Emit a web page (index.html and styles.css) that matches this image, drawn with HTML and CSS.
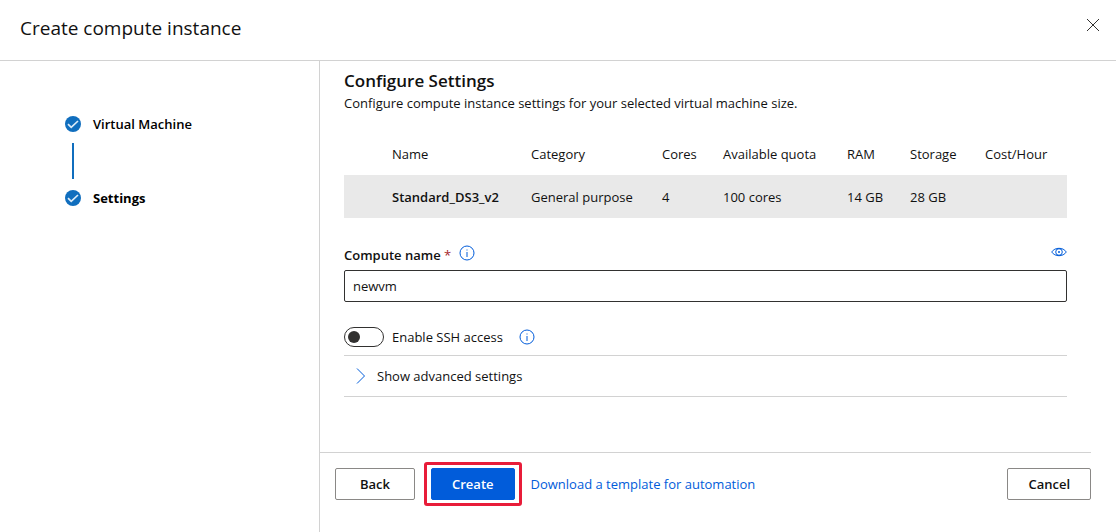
FILE: index.html
```html
<!DOCTYPE html>
<html lang="en">
<head>
<meta charset="utf-8">
<meta name="viewport" content="width=device-width, initial-scale=1">
<title>Create compute instance</title>
<link rel="stylesheet" href="styles.css">
</head>
<body>
<svg class="sprite" aria-hidden="true">
  <symbol id="info" viewBox="0 0 16 16">
    <circle cx="8" cy="8" r="7" fill="none" stroke="currentColor"/>
    <path d="M7.5 4.5h1v1h-1zM7.5 7h1v5h-1z" fill="currentColor"/>
  </symbol>
  <symbol id="done" viewBox="0 0 16 16">
    <circle cx="8" cy="8" r="8" fill="currentColor"/>
    <path d="M3 8.200l3.200 3.200 6.800-6.400" fill="none" stroke="#dcebf8" stroke-width="1.700"/>
  </symbol>
</svg>
<header class="header">
  <h1 class="title">Create compute instance</h1>
  <button class="icon-button" type="button" aria-label="Close">
    <svg class="close-icon" viewBox="0 0 14 14"><path d="M1 1l12 12M13 1L1 13" fill="none" stroke="#323130"/></svg>
  </button>
</header>
<div class="layout">
  <nav class="steps" aria-label="Steps">
    <ol class="step-list">
      <li class="step"><svg class="step-icon"><use href="#done"/></svg>Virtual Machine</li>
      <li class="step step-current" aria-current="step"><svg class="step-icon"><use href="#done"/></svg>Settings</li>
    </ol>
  </nav>
  <div class="panel">
    <main class="content">
      <h2 class="heading">Configure Settings</h2>
      <p class="lead">Configure compute instance settings for your selected virtual machine size.</p>
      <table class="sizes">
        <colgroup><col class="col-pick"><col class="col-name"><col class="col-category"><col class="col-cores"><col class="col-quota"><col class="col-ram"><col class="col-storage"><col></colgroup>
        <thead>
          <tr><td></td><th scope="col">Name</th><th scope="col">Category</th><th scope="col">Cores</th><th scope="col">Available quota</th><th scope="col">RAM</th><th scope="col">Storage</th><th scope="col">Cost/Hour</th></tr>
        </thead>
        <tbody>
          <tr><td></td><th class="size-name" scope="row">Standard_DS3_v2</th><td>General purpose</td><td>4</td><td>100 cores</td><td>14 GB</td><td>28 GB</td><td></td></tr>
        </tbody>
      </table>
      <div class="field-head">
        <label class="field-label" for="name">Compute name <span class="required">*</span></label>
        <button class="icon-button" type="button" aria-label="About compute name"><svg class="info-icon"><use href="#info"/></svg></button>
        <button class="icon-button reveal" type="button" aria-label="Preview">
          <svg class="eye-icon" viewBox="0 0 16 10"><path d="M.7 5C2.500 2.400 5 1.300 8 1.300S13.500 2.400 15.300 5C13.500 7.600 11 8.700 8 8.700S2.500 7.600.7 5z" fill="none" stroke="currentColor"/><circle cx="8" cy="5" r="3.300" fill="none" stroke="currentColor"/><circle cx="8" cy="5" r="1" fill="currentColor"/></svg>
        </button>
      </div>
      <input class="text-input" id="name" type="text" value="newvm">
      <div class="toggle-row">
        <input class="toggle" id="ssh" type="checkbox" role="switch">
        <label for="ssh">Enable SSH access</label>
        <button class="icon-button toggle-info" type="button" aria-label="About SSH access"><svg class="info-icon"><use href="#info"/></svg></button>
      </div>
      <button class="advanced" type="button" aria-expanded="false">
        <svg class="chevron" viewBox="0 0 10 16"><path d="M1 .5L8.500 8 1 15.500" fill="none" stroke="currentColor"/></svg>
        Show advanced settings
      </button>
    </main>
    <footer class="footer">
      <button class="button" type="button">Back</button>
      <div class="highlight"><button class="button primary" type="button">Create</button></div>
      <a class="link" href="#template">Download a template for automation</a>
      <button class="button cancel" type="button">Cancel</button>
    </footer>
  </div>
</div>
</body>
</html>
```
FILE: styles.css
```css
* { box-sizing: border-box; }
body {
  display: flex;
  flex-direction: column;
  min-height: 100vh;
  margin: 0;
  background: #fff;
  color: #111;
  font: 13px/20px "Segoe UI", "Open Sans", "Noto Sans", sans-serif;
}
button, input { font: inherit; color: inherit; }
svg { display: block; }
.sprite { position: absolute; width: 0; height: 0; }
.header {
  display: flex;
  justify-content: space-between;
  padding: 14px 16px 18px 20px;
  border-bottom: 1px solid #d2d2d2;
}
.title { margin: 0; font-size: 19px; font-weight: 400; line-height: 28px; }
.icon-button { display: flex; align-items: center; padding: 0; border: 0; background: none; color: #015cda; }
.close-icon { width: 14px; height: 14px; margin: 0 0 6px; }
.layout { display: flex; flex: 1; }
.steps { flex: 0 0 320px; padding: 53px 24px 0 65px; border-right: 1px solid #d2d2d2; }
.step-list { display: flex; flex-direction: column; margin: 0; padding: 0; list-style: none; }
.step { display: flex; align-items: center; gap: 12px; font-weight: 600; color: #000; }
.step + .step { flex-wrap: wrap; }
.step + .step::before {
  content: "";
  flex: 0 0 100%;
  height: 36px;
  margin: 9px 0 0 7px;
  border-left: 2px solid #106ebe;
}
.step-current { row-gap: 9px; font-weight: 700; }
.step-icon { width: 16px; height: 16px; color: #106ebe; }
.panel { display: flex; flex: 1; flex-direction: column; min-width: 0; }
.content { flex: 1; padding: 8px 49px 24px 24px; }
.heading { margin: 0; font-size: 17px; font-weight: 600; line-height: 24px; }
.lead { margin: 0 0 19px; }
.sizes { width: 100%; table-layout: fixed; border-collapse: collapse; }
.sizes th, .sizes td { height: 43px; padding: 0; font-weight: 400; text-align: left; white-space: nowrap; }
.sizes tbody { background: #e9e9e9; }
.sizes .size-name { font-weight: 600; }
.col-pick { width: 48px; }
.col-name { width: 139px; }
.col-category { width: 131px; }
.col-cores { width: 61px; }
.col-quota { width: 124px; }
.col-ram { width: 63px; }
.col-storage { width: 75px; }
.field-head { display: flex; align-items: flex-start; gap: 8px; margin: 27px 0 5px; }
.field-label { font-weight: 600; }
.required { color: #a4262c; font-weight: 400; }
.info-icon { width: 16px; height: 16px; }
.reveal { margin-left: auto; }
.eye-icon { width: 16px; height: 10px; margin: 2px 0; }
.text-input {
  display: block;
  width: 100%;
  height: 32px;
  padding: 0 8px;
  border: 1px solid #323130;
  border-radius: 2px;
  background: #fff;
}
.toggle-row { display: flex; align-items: center; gap: 8px; padding: 25px 0 8px; border-bottom: 1px solid #d2d2d2; }
.toggle {
  appearance: none;
  display: flex;
  align-items: center;
  width: 40px;
  height: 20px;
  margin: 0;
  padding: 0 3px;
  border: 1px solid #323130;
  border-radius: 10px;
}
.toggle::before { content: ""; width: 12px; height: 12px; border-radius: 50%; background: #323130; }
.toggle:checked { justify-content: flex-end; }
.toggle-info { margin-left: 8px; }
.advanced {
  display: flex;
  align-items: center;
  gap: 11px;
  width: 100%;
  padding: 10px 12px;
  border: 0;
  border-bottom: 1px solid #d2d2d2;
  background: none;
}
.chevron { width: 10px; height: 16px; color: #015cda; }
.footer {
  display: flex;
  align-items: center;
  gap: 9px;
  margin-right: 25px;
  padding: 9px 0 26px 15px;
  border-top: 1px solid #d2d2d2;
}
.button {
  min-width: 80px;
  height: 32px;
  padding: 0 20px;
  border: 1px solid #8a8886;
  border-radius: 2px;
  background: #fff;
  font-weight: 600;
}
.highlight { padding: 3px 4px; border: 3px solid #e81c39; border-radius: 3px; }
.primary { display: block; border-color: #015cda; background: #015cda; color: #fff; }
.link { color: #015cda; text-decoration: none; }
.cancel { margin-left: auto; }
```
